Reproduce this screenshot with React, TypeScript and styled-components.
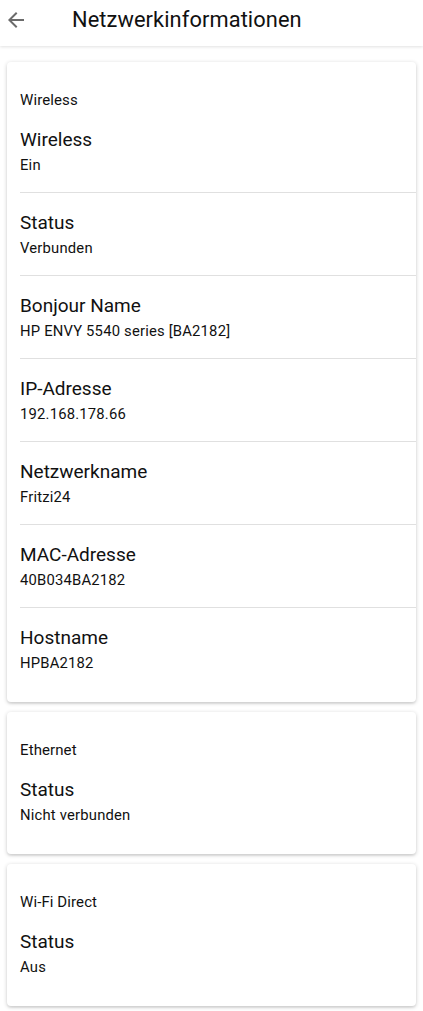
import styled, { createGlobalStyle } from 'styled-components';

const GlobalStyle = createGlobalStyle`
  body {
    margin: 0;
    background: #ffffff;
    font-family: Roboto, 'Noto Sans', sans-serif;
    color: #1a1a1a;
  }
`;

const Page = styled.div`
  width: 423px;
  min-height: 1011px;
  background: #fff;
`;

const Header = styled.header`
  display: flex;
  align-items: center;
  height: 46px;
  padding-bottom: 6px;
  box-sizing: border-box;
  background: #fff;
  box-shadow: 0 1px 3px rgba(0, 0, 0, 0.12);
`;

const BackButton = styled.button`
  display: flex;
  align-items: center;
  justify-content: center;
  width: 24px;
  height: 24px;
  margin-left: 4px;
  padding: 0;
  border: none;
  background: none;
  color: #6b6b6b;
`;

const Title = styled.h1`
  margin: 0 0 0 44px;
  font-size: 21.8px;
  line-height: 26px;
  font-weight: 400;
  color: #111;
  letter-spacing: 0.1px;
`;

const Cards = styled.main`
  display: flex;
  flex-direction: column;
  gap: 10px;
  padding: 16px 7px 6px 7px;
`;

const Card = styled.section`
  background: #fff;
  border-radius: 4px;
  box-shadow: 0 1px 4px rgba(0, 0, 0, 0.2), 0 2px 2px rgba(0, 0, 0, 0.06);
  padding: 0 0 12px 13px;
`;

const SectionLabel = styled.div`
  padding: 28px 0 0;
  font-size: 15px;
  line-height: 20px;
  color: #111;
  letter-spacing: 0.1px;
`;

const Row = styled.div`
  padding: 18px 0 17px;
  border-bottom: 1px solid #e0e0e0;

  &:last-child {
    border-bottom: none;
  }
`;

const RowTitle = styled.div`
  font-size: 19px;
  line-height: 24px;
  color: #111;
`;

const RowValue = styled.div`
  margin-top: 3px;
  font-size: 14.8px;
  line-height: 20px;
  color: #111;
  letter-spacing: 0.2px;
`;

type Item = { title: string; value: string };

const sections: { label: string; items: Item[] }[] = [
  {
    label: 'Wireless',
    items: [
      { title: 'Wireless', value: 'Ein' },
      { title: 'Status', value: 'Verbunden' },
      { title: 'Bonjour Name', value: 'HP ENVY 5540 series [BA2182]' },
      { title: 'IP-Adresse', value: '192.168.178.66' },
      { title: 'Netzwerkname', value: 'Fritzi24' },
      { title: 'MAC-Adresse', value: '40B034BA2182' },
      { title: 'Hostname', value: 'HPBA2182' },
    ],
  },
  {
    label: 'Ethernet',
    items: [{ title: 'Status', value: 'Nicht verbunden' }],
  },
  {
    label: 'Wi-Fi Direct',
    items: [{ title: 'Status', value: 'Aus' }],
  },
];

function ArrowBack() {
  return (
    <svg width='24' height='24' viewBox='0 0 24 24' fill='currentColor'>
      <path d='M20 11H7.83l5.59-5.59L12 4l-8 8 8 8 1.41-1.41L7.83 13H20v-2z' />
    </svg>
  );
}

export default function App() {
  return (
    <Page>
      <GlobalStyle />
      <Header>
        <BackButton aria-label='Zurück'>
          <ArrowBack />
        </BackButton>
        <Title>Netzwerkinformationen</Title>
      </Header>
      <Cards>
        {sections.map((section) => (
          <Card key={section.label}>
            <SectionLabel>{section.label}</SectionLabel>
            {section.items.map((item) => (
              <Row key={item.title}>
                <RowTitle>{item.title}</RowTitle>
                <RowValue>{item.value}</RowValue>
              </Row>
            ))}
          </Card>
        ))}
      </Cards>
    </Page>
  );
}
